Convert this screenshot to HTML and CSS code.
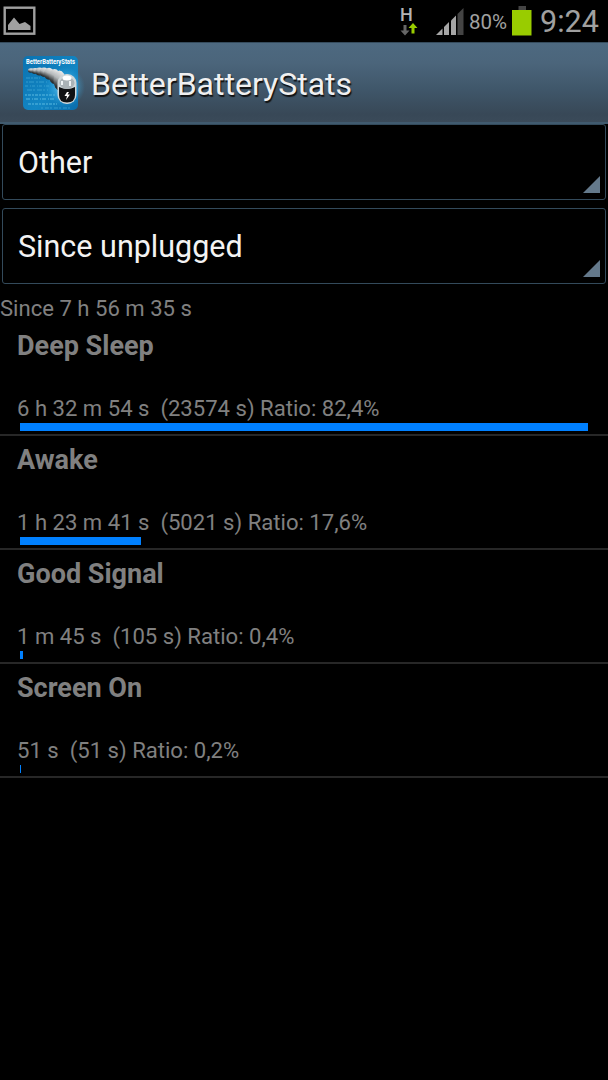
FILE: index.html
```html
<!DOCTYPE html>
<html lang="en">
<head>
    <meta charset="UTF-8">
    <meta name="viewport" content="width=device-width, initial-scale=1.0">
    <title>BetterBatteryStats</title>
    <link rel="stylesheet" href="styles.css">
</head>
<body>
    <!-- Status bar -->
    <div class="status-bar">
        <svg class="picture-icon" width="33" height="29" viewBox="0 0 33 29">
            <rect x="1.7" y="1.7" width="29.6" height="26" fill="none" stroke="#a0a0a0" stroke-width="2.4"/>
            <path d="M5 24V19L11 11.500L16.500 18L22 16L27.500 20V24Z" fill="#a0a0a0"/>
        </svg>
        <div class="network">
            <span class="network-type">H</span>
            <svg class="network-arrows" width="18" height="13" viewBox="0 0 18 13">
                <path d="M3.500 2H6.500V7.500H9.500L5 12.500L0.500 7.500H3.500Z" fill="#666"/>
                <path d="M11.500 10.500H14.500V5H17.500L13 0L8.500 5H11.500Z" fill="#99cc00"/>
            </svg>
        </div>
        <svg class="signal" width="28" height="27" viewBox="0 0 28 27">
            <path d="M0 27L6.500 20.500V27Z" fill="#a6a6a6"/>
            <path d="M8 27V19L13 14V27Z" fill="#a6a6a6"/>
            <path d="M15 27V12.500L20 7.500V27Z" fill="#a6a6a6"/>
            <path d="M21.500 27V6L27.500 0V27Z" fill="#444"/>
        </svg>
        <span class="percent">80%</span>
        <svg class="battery" width="20" height="30" viewBox="0 0 20 30">
            <rect x="6.500" y="0" width="7.500" height="4" fill="#444"/>
            <rect x="0" y="4" width="19.500" height="25.500" fill="#99cc00"/>
        </svg>
        <span class="clock">9:24</span>
    </div>

    <!-- Action bar -->
    <div class="action-bar">
        <svg class="app-icon" width="55" height="55" viewBox="0 0 55 55">
            <defs>
                <linearGradient id="iconBg" x1="0" y1="0" x2="1" y2="1">
                    <stop offset="0" stop-color="#0b72b0"/>
                    <stop offset="0.600" stop-color="#1286c4"/>
                    <stop offset="1" stop-color="#0a6cab"/>
                </linearGradient>
                <radialGradient id="glow">
                    <stop offset="0" stop-color="#8fdcff"/>
                    <stop offset="1" stop-color="#2aa5e0" stop-opacity="0"/>
                </radialGradient>
                <linearGradient id="metal" x1="0.700" y1="0" x2="0.300" y2="1">
                    <stop offset="0" stop-color="#f0f0f0"/>
                    <stop offset="0.450" stop-color="#b4b8ba"/>
                    <stop offset="0.800" stop-color="#3c4042"/>
                    <stop offset="1" stop-color="#1c1e20"/>
                </linearGradient>
            </defs>
            <rect width="55" height="54" rx="5" fill="url(#iconBg)"/>
            <circle cx="42" cy="31" r="20" fill="url(#glow)"/>
            <g fill="none" stroke="#4db1dc" stroke-width="1.200" opacity="0.600">
                <path d="M3 22H17" stroke-dasharray="4 1 2 1"/>
                <path d="M3 26H24" stroke-dasharray="2 1 5 2"/>
                <path d="M2 30H28" stroke-dasharray="3 2 1 1"/>
                <path d="M4 34H25" stroke-dasharray="5 1 2 2"/>
                <path d="M2 39H32" stroke-dasharray="2 1 3 1" stroke-width="2"/>
                <path d="M3 43H32" stroke-dasharray="4 2 1 1" stroke-width="2"/>
                <path d="M5 48H34" stroke-dasharray="3 1 2 1" stroke-width="2"/>
                <path d="M18 52H48" stroke-dasharray="2 2 4 1"/>
            </g>
            <!-- curved row of cells -->
            <g fill="url(#metal)">
                <ellipse cx="8" cy="14.500" rx="3" ry="2.200"/>
                <ellipse cx="12" cy="15" rx="3.500" ry="3"/>
                <ellipse cx="16.500" cy="15.500" rx="4" ry="4"/>
                <ellipse cx="21" cy="16.200" rx="4.500" ry="4.800"/>
                <ellipse cx="26" cy="17.800" rx="5" ry="6"/>
                <ellipse cx="31.500" cy="20.500" rx="5.500" ry="7.500"/>
                <ellipse cx="36.500" cy="24.500" rx="6" ry="10"/>
            </g>
            <rect x="34.500" y="18" width="19" height="30" rx="9" fill="#ced6d9"/>
            <path d="M36 31Q44.500 35 52 31V39Q52 46.500 44 46.500T36 39Z" fill="#101214"/>
            <ellipse cx="44" cy="27" rx="7.500" ry="6" fill="#aab3b7"/>
            <ellipse cx="44" cy="22" rx="4.500" ry="2.500" fill="#fff"/>
            <path d="M39 25V29M47 25V30" stroke="#eef3f5" stroke-width="2"/>
            <path d="M44 36L41.500 40H44L43 44L47 38.500H44.500L46 36Z" fill="#fff"/>
            <text class="icon-label" x="3" y="7.500" textLength="49" lengthAdjust="spacingAndGlyphs">BetterBatteryStats</text>
        </svg>
        <h1>BetterBatteryStats</h1>
    </div>

    <!-- Stat type and reference selectors -->
    <div class="spinners">
        <div class="spinner">Other</div>
        <div class="spinner">Since unplugged</div>
    </div>

    <p class="since">Since 7 h 56 m 35 s</p>

    <div class="stats">
        <div class="stat">
            <h2>Deep Sleep</h2>
            <p>6 h 32 m 54 s&nbsp; (23574 s) Ratio: 82,4%</p>
            <div class="bar" style="width: 100%"></div>
        </div>
        <div class="stat">
            <h2>Awake</h2>
            <p>1 h 23 m 41 s&nbsp; (5021 s) Ratio: 17,6%</p>
            <div class="bar" style="width: 21.3%"></div>
        </div>
        <div class="stat">
            <h2>Good Signal</h2>
            <p>1 m 45 s&nbsp; (105 s) Ratio: 0,4%</p>
            <div class="bar" style="width: 0.5%"></div>
        </div>
        <div class="stat">
            <h2>Screen On</h2>
            <p>51 s&nbsp; (51 s) Ratio: 0,2%</p>
            <div class="bar" style="width: 0.2%"></div>
        </div>
    </div>
</body>
</html>
```

FILE: styles.css
```css
* {
    box-sizing: border-box;
}

body {
    margin: 0;
    height: 1080px;
    overflow: hidden;
    background-color: #000;
    color: #808080;
    font-family: Roboto, sans-serif;
}

h1, h2, p {
    margin: 0;
    font-weight: normal;
    white-space: nowrap;
}

/* Status bar */
.status-bar {
    display: flex;
    height: 42px;
    padding: 0 9px 0 3px;
    color: #a0a0a0;
}

.picture-icon {
    margin-top: 6px;
}

.network {
    display: flex;
    flex-direction: column;
    width: 18px;
    margin-left: auto;
    padding-top: 6px;
}

.network-type {
    color: #b4b4b4;
    font-size: 18px;
    font-weight: 500;
    line-height: 17px;
}

.signal {
    margin: 8px 0 0 18px;
}

.percent {
    width: 38px;
    margin-left: 5px;
    font-size: 20.5px;
    line-height: 44px;
}

.battery {
    margin: 6px 0 0 5px;
}

.clock {
    width: 59px;
    margin-left: 8px;
    font-size: 30.5px;
    line-height: 43px;
}

/* Action bar */
.action-bar {
    display: flex;
    align-items: center;
    height: 82px;
    padding: 0 23px;
    background: linear-gradient(#4d6980, #4b657b 25%, #3f5669 60%, #384857 90%, #3a4a59);
    border-top: 1px solid #354b5c;
    border-bottom: 2px solid #405a6e;
}

.app-icon {
    flex: none;
    margin-top: 1px;
    overflow: visible;
}

.icon-label {
    fill: #fff;
    font-size: 6.5px;
    font-weight: bold;
}

.action-bar h1 {
    margin-left: 13px;
    padding-top: 2px;
    color: #f0f0f0;
    font-size: 32px;
    text-shadow: 1px 2px 1px #111;
}

/* Spinners */
.spinners {
    display: flex;
    flex-direction: column;
    gap: 8px;
    padding: 0 2px;
}

.spinner {
    position: relative;
    height: 76px;
    padding-left: 15px;
    border: 1px solid #334a5b;
    border-radius: 3px;
    color: #f3f3f3;
    font-size: 30.5px;
    line-height: 76px;
}

.spinner::after {
    content: "";
    position: absolute;
    right: 5px;
    bottom: 6px;
    width: 17px;
    height: 17px;
    background-color: #64798b;
    clip-path: polygon(100% 0, 100% 100%, 0 100%);
}

.since {
    height: 38px;
    padding-top: 11px;
    font-size: 22.1px;
    line-height: 27px;
}

/* Stat list */
.stat {
    height: 114px;
    padding: 7px 20px 0;
    border-bottom: 2px solid #272727;
}

.stat h2 {
    margin-left: -3px;
    font-size: 27px;
    font-weight: bold;
    line-height: 34px;
}

.stat p {
    margin: 31px 0 0 -3px;
    font-size: 22.1px;
    line-height: 28px;
}

.bar {
    height: 8px;
    margin-top: 1px;
    background-color: #0080ff;
}
```
